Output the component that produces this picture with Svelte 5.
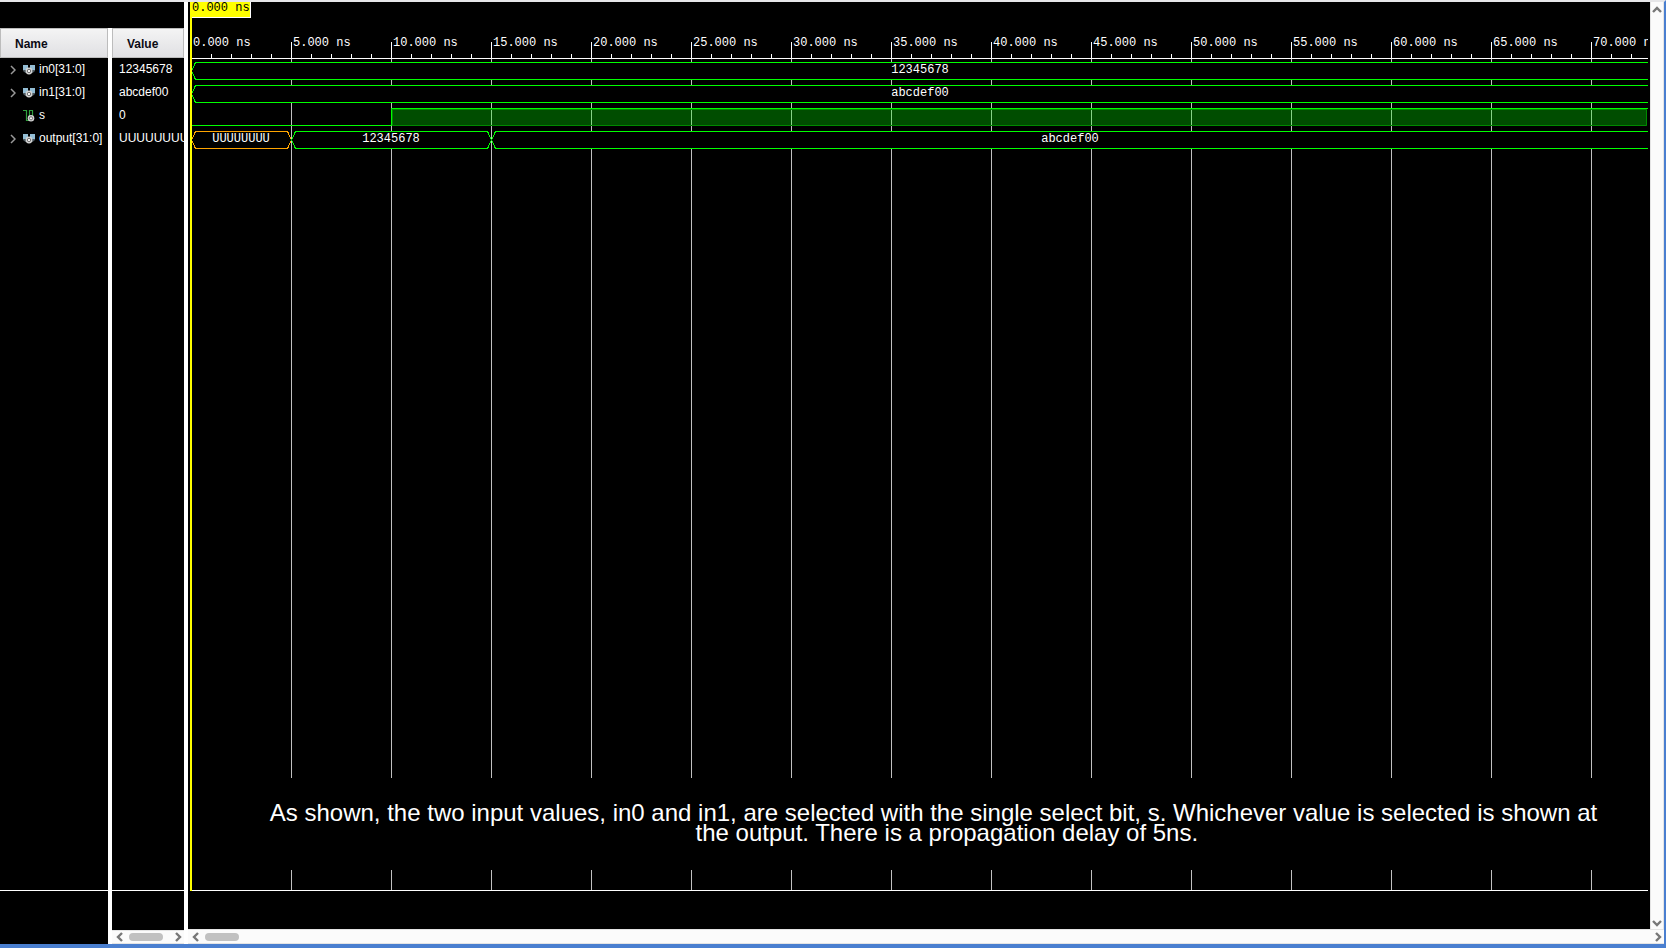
<script>
  const STEP = 100;
  const signals = [
    { name: 'in0[31:0]', value: '12345678', bus: true, segments: [{ from: 0, text: '12345678' }] },
    { name: 'in1[31:0]', value: 'abcdef00', bus: true, segments: [{ from: 0, text: 'abcdef00' }] },
    { name: 's', value: '0', bus: false, rise: 200 },
    {
      name: 'output[31:0]', value: 'UUUUUUUU', bus: true,
      segments: [
        { from: 0, to: 100, text: 'UUUUUUUU', unknown: true },
        { from: 100, to: 300, text: '12345678' },
        { from: 300, text: 'abcdef00' }
      ]
    }
  ];
  let width = $state(1457);
  let majors = $derived(Array.from({ length: Math.ceil(width / STEP) }, (_, i) => i));
  let minors = $derived(
    Array.from({ length: Math.ceil(width / 20) }, (_, i) => i).filter((i) => i % 5 !== 0)
  );

  function outline(seg) {
    const a = seg.from + 0.5;
    if (seg.to === undefined) {
      return `M${width + 4} 3.5H${a + 4}L${a} 12L${a + 4} 20.5H${width + 4}`;
    }
    const b = seg.to + 0.5;
    return `M${a + 4} 3.5H${b - 4}L${b} 12L${b - 4} 20.5H${a + 4}L${a} 12Z`;
  }
  function middle(seg) {
    return Math.round((seg.from + (seg.to ?? width)) / 2);
  }
</script>

{#snippet chevron(dir)}
  <svg class="chev {dir}" width="8" height="10" viewBox="0 0 8 10" aria-hidden="true">
    <path d="M6 1L2 5L6 9" fill="none" stroke="#777" stroke-width="2.4" />
  </svg>
{/snippet}

{#snippet hbar(label)}
  <div class="hbar">
    <button aria-label="Scroll {label} left">{@render chevron('left')}</button>
    <span class="thumb"></span>
    <button class="end" aria-label="Scroll {label} right">{@render chevron('right')}</button>
  </div>
{/snippet}

<main>
  <section class="pane names">
    <div class="top"></div>
    <div class="head">Name</div>
    <ul>
      {#each signals as s}
        <li>
          {#if s.bus}
            <button class="expand" aria-label="Expand {s.name}">
              <svg width="6" height="10" viewBox="0 0 6 10"><path d="M1 1L5 5L1 9" fill="none" stroke="#999" stroke-width="1.5" /></svg>
            </button>
            <svg class="icon" width="12" height="12" viewBox="0 0 12 12">
              <path d="M0 5H12V7L9.5 9H2.5L0 7Z" fill="#4d5960" />
              <path d="M0 1H5V5L3 6H0ZM7 1H12V6H9L7 5Z" fill="#93bdd4" />
              <circle cx="6" cy="7" r="3.4" fill="#d4d4d4" />
              <circle cx="6" cy="7" r="1.7" fill="#f4f4f4" stroke="#666" stroke-width=".9" />
            </svg>
          {:else}
            <span class="expand"></span>
            <svg class="icon" width="12" height="12" viewBox="0 0 12 12">
              <path d="M0 .5H3.5V10.5H6.5V.5H9.5V6" fill="none" stroke="#2fa03e" stroke-width="1.2" />
              <circle cx="8" cy="8.3" r="3.3" fill="#d4d4d4" />
              <circle cx="8" cy="8.3" r="1.6" fill="#f4f4f4" stroke="#666" stroke-width=".9" />
            </svg>
          {/if}
          <span>{s.name}</span>
        </li>
      {/each}
    </ul>
    <div class="floor"></div>
    <div class="pad"></div>
  </section>
  <div class="split first"></div>
  <section class="pane values">
    <div class="top"></div>
    <div class="head">Value</div>
    <ul>
      {#each signals as s}<li>{s.value}</li>{/each}
    </ul>
    <div class="floor"></div>
    <div class="pad">{@render hbar('values')}</div>
  </section>
  <div class="split"></div>
  <section class="wave">
    <div class="upper">
      <div class="canvas">
        <div class="time"><span>0.000 ns</span></div>
        <div class="plot" bind:clientWidth={width}>
          <svg class="ruler" height="33">
            {#each majors as m}
              {#if m > 0}<rect x={m * STEP} y="16" width="1" height="17" fill="#fff" />{/if}
              <text x={m * STEP + 2} y="20">{m * 5}.000 ns</text>
            {/each}
            {#each minors as m}<rect x={m * 20} y="28" width="1" height="4" fill="#fff" />{/each}
            <rect x="0" y="32" width="100%" height="1" fill="#fff" />
          </svg>
          <div class="grid">
            {#each signals as s}
              <svg class="row" height="23">
                {#if s.bus}
                  {#each s.segments as seg}
                    <path d={outline(seg)} fill="#000" stroke={seg.unknown ? '#ffa500' : '#00ff00'} shape-rendering="crispEdges" />
                    <text x={middle(seg)} y="14" text-anchor="middle">{seg.text}</text>
                  {/each}
                {:else}
                  <rect x={s.rise} y="3" width={width - s.rise - 1} height="18" fill="#00ff00" fill-opacity=".3" />
                  <path d="M{s.rise + 1.5} 4.5H{width - 1.5}V20.5H{s.rise + 1.5}Z" fill="none" stroke="#008a00" />
                  <path d="M1 20.5H{s.rise + 0.5}V3.5H{width}" fill="none" stroke="#00ff00" />
                {/if}
              </svg>
            {/each}
          </div>
          <p>As shown, the two input values, in0 and in1, are selected with the single select bit, s. Whichever value is selected is shown at<br />&nbsp;&nbsp;&nbsp;&nbsp;the output. There is a propagation delay of 5ns.</p>
          <div class="ticks"></div>
          <div class="floor"></div>
        </div>
        <div class="under"></div>
      </div>
      <div class="vbar">
        <button aria-label="Scroll up">{@render chevron('up')}</button>
        <button aria-label="Scroll down">{@render chevron('down')}</button>
      </div>
    </div>
    {@render hbar('waveform')}
  </section>
</main>

<style>
  :global(body) { margin: 0; background: #000; }
  main {
    box-sizing: border-box;
    display: flex;
    height: 100vh;
    border-top: 2px solid #e6e6e8;
    border-right: 2px solid #4a7fd0;
    border-bottom: 4px solid #4a7fd0;
    background: #000;
    color: #fff;
    font: 12px/23px "Liberation Sans", Arial, sans-serif;
  }
  button { padding: 0; border: 0; background: none; display: flex; align-items: center; justify-content: center; }
  svg { display: block; flex: none; }
  .pane { display: flex; flex-direction: column; flex: none; overflow: hidden; }
  .names { width: 108px; }
  .values { width: 72px; }
  .top { height: 26px; flex: none; }
  .head {
    box-sizing: border-box;
    height: 30px;
    flex: none;
    padding-left: 14px;
    border: 1px solid #bcbcbc;
    background: linear-gradient(#f4f4f4, #e0e0e3);
    color: #0a0a14;
    font-weight: bold;
    line-height: 30px;
  }
  ul { list-style: none; margin: 0; padding: 0; flex: 1; }
  li { display: flex; align-items: center; height: 23px; white-space: nowrap; }
  .names li { padding-left: 10px; }
  .values li { padding-left: 7px; }
  .expand { width: 6px; height: 10px; margin-right: 7px; }
  .icon { margin-right: 4px; }
  .floor { height: 1px; flex: none; background: #fff; }
  .pad { height: 53px; flex: none; display: flex; flex-direction: column; justify-content: flex-end; }
  .split { width: 4px; flex: none; background: #fff; }
  .first { margin-top: 26px; }
  .wave { flex: 1; min-width: 0; display: flex; flex-direction: column; }
  .upper { flex: 1; min-height: 0; display: flex; }
  .canvas { flex: 1; min-width: 0; display: flex; flex-direction: column; padding: 0 2px; }
  .time { height: 24px; flex: none; border-left: 2px solid #ff0; }
  .time span {
    display: block;
    width: 58px;
    height: 15px;
    border-right: 1px solid #fff;
    border-bottom: 1px solid #fff;
    background: #ff0;
    color: #000;
    font: 12px/13px "Liberation Mono", "Courier New", monospace;
    white-space: nowrap;
  }
  .plot { position: relative; flex: 1; min-height: 0; display: flex; flex-direction: column; margin-left: 1px; }
  .plot::before {
    content: "";
    position: absolute;
    z-index: 1;
    top: 0;
    bottom: 0;
    left: -1px;
    width: 2px;
    background: #ff0;
  }
  .plot svg { width: 100%; overflow: hidden; }
  text { fill: #fff; font: 12px "Liberation Mono", "Courier New", monospace; }
  .grid, .ticks { background: repeating-linear-gradient(to right, #c0c0c0 0 1px, transparent 1px 100px); }
  .grid { flex: 1; }
  p {
    margin: 0;
    height: 92px;
    box-sizing: border-box;
    flex: none;
    padding: 25px 36px 0 64px;
    font-size: 24px;
    line-height: 20px;
    text-align: center;
  }
  .ticks { height: 20px; flex: none; }
  .under { height: 38px; flex: none; }
  .vbar {
    box-sizing: border-box;
    width: 14px;
    flex: none;
    display: flex;
    flex-direction: column;
    justify-content: space-between;
    padding-top: 2px;
    border: 1px solid #e4e4e4;
    border-width: 0 1px;
    background: #fbfbfb;
  }
  .vbar button { height: 12px; }
  .hbar {
    box-sizing: border-box;
    height: 14px;
    flex: none;
    display: flex;
    align-items: center;
    padding: 0 2px 0 4px;
    border: 1px solid #e4e4e4;
    border-width: 1px 0;
    background: #fbfbfb;
  }
  .wave .hbar { height: 15px; }
  .hbar button { width: 8px; height: 10px; }
  .hbar .end { margin-left: auto; }
  .thumb { width: 34px; height: 8px; margin-left: 5px; border-radius: 4px; background: #c1c1c1; }
  .right { transform: rotate(180deg); }
  .up { transform: rotate(90deg); }
  .down { transform: rotate(-90deg); }
</style>
